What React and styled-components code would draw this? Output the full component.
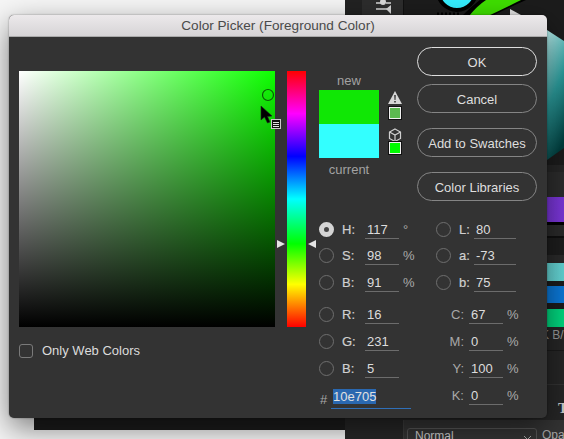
import React from 'react';
import styled, { createGlobalStyle } from 'styled-components';

const GlobalStyle = createGlobalStyle`
  html, body {
    margin: 0;
    padding: 0;
    background: #f4f4f4;
  }
  body {
    font-family: "Liberation Sans", Arial, sans-serif;
  }
`;

const App = () => (
  <Page>
    <GlobalStyle />
    <Backdrop>
      <DesktopArea>
        <CanvasEdge />
      </DesktopArea>
      <AppPanel>
        <ArtworkStrip />
        {STRIPES.map(([height, color], i) => (
          <Stripe key={i} $height={height} $color={color} />
        ))}
        <PanelLabel>K B/</PanelLabel>
        <LayerBand>
          <BandLine $top />
          <BandLine />
        </LayerBand>
        <PanelTitle>T</PanelTitle>
        <LayerRow>
          <BlendSelect>
            Normal
            <SelectChevron width="9" height="6" viewBox="0 0 9 6">
              <path d="M1 1l3.5 3.5L8 1" fill="none" stroke="#aaa" strokeWidth="1" />
            </SelectChevron>
          </BlendSelect>
          <OpacityLabel>Opac</OpacityLabel>
        </LayerRow>
      </AppPanel>
    </Backdrop>

    <Dialog>
      <TitleBar>Color Picker (Foreground Color)</TitleBar>
      <Body>
        <PickerPane>
          <ColorField>
            <FieldMarker />
            <CursorIcon />
          </ColorField>
          <WebColors>
            <Checkbox />
            Only Web Colors
          </WebColors>
        </PickerPane>

        <HueStrip>
          <HueArrow $side="left" />
          <HueArrow $side="right" />
        </HueStrip>

        <ControlsPane>
          <TopControls>
            <PreviewColumn>
              <PreviewLabel>new</PreviewLabel>
              <PreviewSwatch $color="#10e705" />
              <PreviewSwatch $color="#33ffff" />
              <PreviewLabel $below>current</PreviewLabel>
            </PreviewColumn>
            <WarningColumn>
              <WarningGroup>
                <GamutIcon />
                <MiniSwatch $color="#5cb950" />
              </WarningGroup>
              <WarningGroup $tight>
                <CubeIcon />
                <MiniSwatch $color="#00fb00" />
              </WarningGroup>
            </WarningColumn>
            <ButtonStack>
              <ButtonPair>
                <PillButton $primary>OK</PillButton>
                <PillButton>Cancel</PillButton>
              </ButtonPair>
              <PillButton>Add to Swatches</PillButton>
              <PillButton>Color Libraries</PillButton>
            </ButtonStack>
          </TopControls>

          <ValuesGrid>
            <ValuesColumn $width={117}>
              <ValueGroup $short>
                <ValueRow radio="on" label="H:" value="117" unit="°" />
                <ValueRow radio="off" label="S:" value="98" unit="%" />
                <ValueRow radio="off" label="B:" value="91" unit="%" />
              </ValueGroup>
              <ValueGroup>
                <ValueRow radio="off" label="R:" value="16" />
                <ValueRow radio="off" label="G:" value="231" />
                <ValueRow radio="off" label="B:" value="5" />
              </ValueGroup>
              <HexRow>
                <HexMark>#</HexMark>
                <HexField>
                  <HexSelection>10e705</HexSelection>
                </HexField>
              </HexRow>
            </ValuesColumn>
            <ValuesColumn $width={101}>
              <ValueGroup $short>
                <LabRow label="L:" value="80" />
                <LabRow label="a:" value="-73" />
                <LabRow label="b:" value="75" />
              </ValueGroup>
              <ValueGroup>
                <CmykRow label="C:" value="67" />
                <CmykRow label="M:" value="0" />
                <CmykRow label="Y:" value="100" />
                <CmykRow label="K:" value="0" />
              </ValueGroup>
            </ValuesColumn>
          </ValuesGrid>
        </ControlsPane>
      </Body>
    </Dialog>
  </Page>
);

const ValueRow = ({ radio, label, value, unit }) => (
  <Row>
    <Radio $on={radio === 'on'} />
    <RowLabel>{label}</RowLabel>
    <Field $width={34}>{value}</Field>
    {unit && <Unit>{unit}</Unit>}
  </Row>
);

const LabRow = ({ label, value }) => (
  <Row>
    <Radio />
    <RowLabel $narrow>{label}</RowLabel>
    <Field $width={42}>{value}</Field>
  </Row>
);

const CmykRow = ({ label, value }) => (
  <Row>
    <CmykLabel>{label}</CmykLabel>
    <Field $width={34}>{value}</Field>
    <Unit>%</Unit>
  </Row>
);

const ArtworkStrip = () => (
  <ArtSvg viewBox="345 0 219 172" width="219" height="172">
    <defs>
      <linearGradient id="teal" x1="0.2" y1="0" x2="0.5" y2="1">
        <stop offset="0" stopColor="#b4efee" />
        <stop offset="0.5" stopColor="#2c9c9c" />
        <stop offset="1" stopColor="#003c3c" />
      </linearGradient>
    </defs>
    <rect x="345" y="0" width="219" height="172" fill="#1c1c1c" />
    <rect x="345" y="0" width="17" height="20" fill="#222" />
    <rect x="362" y="0" width="41" height="20" fill="#2d2d2d" />
    <rect x="403" y="0" width="1" height="20" fill="#111" />
    <path d="M376 3h6M386 3h5" stroke="#d8d8d8" strokeWidth="1.5" />
    <circle cx="383" cy="2" r="3" fill="#d8d8d8" />
    <path d="M376 9h11" stroke="#d8d8d8" strokeWidth="1.5" />
    <path d="M386 9l5-4v9z" fill="#d8d8d8" />
    <circle cx="457" cy="-9" r="19" fill="#35eeff" stroke="#000" strokeWidth="4" />
    <path d="M462 16 Q472 6 480 0 L526 0 Q508 8 492 16 Z" fill="#000" />
    <path d="M469 16 Q477 6 486 0 L521 0 Q505 8 488 16 Z" fill="#3fe000" />
    <path d="M437 14h24" stroke="#000" strokeWidth="3" strokeDasharray="2 2" />
    <path d="M510 9L521 15V16H510Z" fill="#e4e4e4" />
    <path d="M547 30L564 41V148L547 160Z" fill="url(#teal)" />
    <rect x="345" y="165" width="219" height="7" fill="#262626" />
  </ArtSvg>
);

const FieldMarker = () => (
  <MarkerSvg width="14" height="14" viewBox="0 0 14 14">
    <circle cx="7" cy="7" r="5.5" fill="none" stroke="#0a5c06" strokeWidth="1.2" />
  </MarkerSvg>
);

const CursorIcon = () => (
  <CursorSvg width="24" height="26" viewBox="0 0 24 26">
    <path d="M1 1L1 15L4.5 12L7.5 18L10 17L7.5 11.5L12 11Z" fill="#000" stroke="#222" strokeWidth="0.6" />
    <rect x="11.5" y="14.5" width="9" height="9" fill="#111" stroke="#c8c8c8" strokeWidth="1" />
    <path d="M13 17.5h6M13 19.5h6M13 21.5h6" stroke="#e0e0e0" strokeWidth="1" />
  </CursorSvg>
);

const GamutIcon = () => (
  <svg width="14" height="13" viewBox="0 0 14 13">
    <path d="M7 0L14 13H0Z" fill="#d6d6d6" />
    <path d="M6.2 4h1.6L7.5 9h-1zM6.2 10h1.6v1.6H6.2z" fill="#333" />
  </svg>
);

const CubeIcon = () => (
  <svg width="14" height="14" viewBox="0 0 14 14">
    <path d="M7 1L12.5 4V10.5L7 13.5L1.5 10.5V4Z" fill="none" stroke="#cfcfcf" strokeWidth="1.2" />
    <path d="M1.5 4L7 7L12.5 4M7 7V13.5" fill="none" stroke="#cfcfcf" strokeWidth="1.2" />
  </svg>
);

const STRIPES = [
  [25, '#2c2c2c'],
  [25, 'linear-gradient(90deg, #5d2bd0, #7b36d8)'],
  [3, '#000'],
  [11, '#2a2a2a'],
  [2, '#0f0f0f'],
  [17, '#1d1d1d'],
  [8, '#2a2a2a'],
  [18, 'linear-gradient(90deg, #8fe3e0, #63d4d4)'],
  [5, '#1c1c1c'],
  [17, '#0b78d8'],
  [6, '#1c1c1c'],
  [18, '#00d67e'],
];

const Page = styled.div`
  position: relative;
  width: 564px;
  height: 439px;
  overflow: hidden;
`;

const Backdrop = styled.div`
  display: flex;
  height: 100%;
`;

const DesktopArea = styled.div`
  width: 345px;
  display: flex;
  flex-direction: column;
  justify-content: flex-end;
  background: #f6f6f6;
`;

const CanvasEdge = styled.div`
  height: 12px;
  margin: 0 0 9px 34px;
  background: #1b1b1b;
`;

const AppPanel = styled.div`
  flex: 1;
  display: flex;
  flex-direction: column;
  background: #262626;
  overflow: hidden;
`;

const ArtSvg = styled.svg`
  display: block;
  flex: none;
`;

const Stripe = styled.div`
  flex: none;
  height: ${props => props.$height}px;
  background: ${props => props.$color};
`;

const PanelLabel = styled.div`
  height: 16px;
  padding-left: 196px;
  font-size: 12px;
  line-height: 16px;
  color: #9a9a9a;
  white-space: nowrap;
`;

const LayerBand = styled.div`
  flex: none;
  height: 54px;
  display: flex;
  flex-direction: column;
  justify-content: space-between;
  padding: 7px 0 12px;
  box-sizing: border-box;
`;

const BandLine = styled.div`
  height: 1px;
  background: ${props => props.$top ? '#1a1a1a' : '#333'};
`;

const PanelTitle = styled.div`
  height: 23px;
  padding-left: 213px;
  font: bold 15px/23px "Liberation Serif", serif;
  color: #ccc;
`;

const LayerRow = styled.div`
  flex: none;
  display: flex;
  align-items: flex-start;
  gap: 5px;
  padding-left: 62px;
  height: 19px;
  background: #333;
  box-shadow: inset 58px 0 0 #262626, inset 59px 0 0 #3c3c3c;
`;

const BlendSelect = styled.div`
  position: relative;
  flex: none;
  width: 130px;
  height: 24px;
  margin-top: 8px;
  box-sizing: border-box;
  padding-left: 7px;
  border: 1px solid #555;
  border-radius: 3px;
  font-size: 12px;
  line-height: 14px;
  color: #ccc;
`;

const SelectChevron = styled.svg`
  position: absolute;
  right: 4px;
  top: 6px;
`;

const OpacityLabel = styled.div`
  margin-top: 8px;
  font-size: 12px;
  line-height: 14px;
  color: #aaa;
`;

const Dialog = styled.div`
  position: absolute;
  left: 9px;
  top: 15px;
  width: 538px;
  height: 403px;
  border-radius: 5px;
  background: #333;
  box-shadow: 0 10px 30px rgba(0, 0, 0, 0.5), 0 0 2px rgba(0, 0, 0, 0.4);
  overflow: hidden;
  color: #ddd;
  font-size: 13px;
`;

const TitleBar = styled.div`
  height: 22px;
  box-sizing: border-box;
  border-bottom: 1px solid #aaa;
  background: linear-gradient(#ece9eb, #d6d4d6);
  color: #4a4a4a;
  font-size: 13.6px;
  line-height: 22px;
  text-align: center;
`;

const Body = styled.div`
  display: flex;
  align-items: flex-start;
  padding: 10px 10px 0;
`;

const PickerPane = styled.div`
  width: 256px;
  margin-top: 24px;
`;

const ColorField = styled.div`
  position: relative;
  height: 256px;
  background:
    linear-gradient(rgba(0, 0, 0, 0), #000),
    linear-gradient(90deg, #fff, #0dff00);
`;

const MarkerSvg = styled.svg`
  position: absolute;
  left: 242px;
  top: 17px;
`;

const CursorSvg = styled.svg`
  position: absolute;
  left: 241px;
  top: 34px;
`;

const WebColors = styled.label`
  display: flex;
  align-items: center;
  gap: 9px;
  margin-top: 16px;
  font-size: 13px;
  color: #dcdcdc;
`;

const Checkbox = styled.span`
  width: 14px;
  height: 14px;
  box-sizing: border-box;
  border: 1px solid #7a7a7a;
  border-radius: 3px;
`;

const HueStrip = styled.div`
  position: relative;
  flex: none;
  width: 19px;
  height: 256px;
  margin: 24px 0 0 12px;
  background: linear-gradient(
    #ff0000 0%,
    #ff00ff 16.67%,
    #0000ff 33.33%,
    #00ffff 50%,
    #00ff00 67.5%,
    #ffff00 83.33%,
    #ff0000 100%
  );
`;

const HueArrow = styled.span`
  position: absolute;
  top: 169px;
  ${props => props.$side === 'left' ? 'left: -10px;' : 'right: -10px;'}
  width: 0;
  height: 0;
  border-top: 4px solid transparent;
  border-bottom: 4px solid transparent;
  ${props => props.$side === 'left' ? 'border-left: 8px solid #e4e4e4;' : 'border-right: 8px solid #e4e4e4;'}
`;

const ControlsPane = styled.div`
  flex: none;
  width: 218px;
  margin-left: 13px;
`;

const TopControls = styled.div`
  display: flex;
  align-items: flex-start;
  height: 169px;
`;

const PreviewColumn = styled.div`
  width: 60px;
  padding-top: 26px;
`;

const PreviewLabel = styled.div`
  height: 17px;
  margin-top: ${props => props.$below ? '4px' : '0'};
  font-size: 13px;
  line-height: 15px;
  text-align: center;
  color: #a2a2a2;
`;

const PreviewSwatch = styled.div`
  height: 34px;
  background: ${props => props.$color};
`;

const WarningColumn = styled.div`
  width: 14px;
  margin-left: 9px;
  padding-top: 44px;
  display: flex;
  flex-direction: column;
  gap: 9px;
`;

const WarningGroup = styled.div`
  display: flex;
  flex-direction: column;
  align-items: center;
  gap: ${props => props.$tight ? '0' : '3px'};

  svg {
    display: block;
  }
`;

const MiniSwatch = styled.div`
  width: 12px;
  height: 12px;
  box-sizing: border-box;
  border: 1px solid #f0f0f0;
  box-shadow: 0 0 0 1px #111;
  background: ${props => props.$color};
`;

const ButtonStack = styled.div`
  width: 120px;
  margin-left: auto;
  display: flex;
  flex-direction: column;
  gap: 15px;
`;

const ButtonPair = styled.div`
  display: flex;
  flex-direction: column;
  gap: 8px;
`;

const PillButton = styled.div`
  height: 29px;
  box-sizing: border-box;
  border: 1px solid ${props => props.$primary ? '#dedede' : '#858585'};
  border-radius: 15px;
  font-size: 13px;
  line-height: 29px;
  text-align: center;
  color: #dedede;
`;

const ValuesGrid = styled.div`
  display: flex;
`;

const ValuesColumn = styled.div`
  flex: none;
  width: ${props => props.$width}px;
  display: flex;
  flex-direction: column;
  gap: 5px;
`;

const ValueGroup = styled.div`
  display: flex;
  flex-direction: column;

  > * {
    height: ${props => props.$short ? '26.5px' : '27px'};
  }
`;

const Row = styled.div`
  display: flex;
  align-items: center;
`;

const Radio = styled.span`
  flex: none;
  width: 15px;
  height: 15px;
  box-sizing: border-box;
  border-radius: 50%;
  border: ${props => props.$on ? '5px solid #d4d4d4' : '1px solid #6e6e6e'};
  background: ${props => props.$on ? '#444' : 'transparent'};
  margin-right: 8px;
`;

const RowLabel = styled.span`
  flex: none;
  width: ${props => props.$narrow ? '15px' : '23px'};
  color: #d0d0d0;
  -webkit-text-stroke: 0.2px #d0d0d0;
`;

const CmykLabel = styled.span`
  flex: none;
  width: 33px;
  padding-right: 5px;
  box-sizing: border-box;
  text-align: right;
  color: #a8a8a8;
`;

const Field = styled.span`
  flex: none;
  width: ${props => props.$width}px;
  height: 19px;
  box-sizing: border-box;
  padding-left: 2px;
  border-bottom: 1px solid #6c6c6c;
  line-height: 19px;
  color: #dcdcdc;
`;

const Unit = styled.span`
  margin-left: 4px;
  color: #aaa;
  font-size: 13px;
`;

const HexRow = styled.div`
  display: flex;
  align-items: center;
  height: 27px;
  margin-top: -1px;
`;

const HexMark = styled.span`
  width: 12px;
  padding-left: 1px;
  color: #a8a8a8;
`;

const HexField = styled.span`
  width: 80px;
  height: 20px;
  box-sizing: border-box;
  padding: 0 0 0 2px;
  border-bottom: 1px solid #2f6fb8;
  margin-left: -1px;
`;

const HexSelection = styled.span`
  display: inline-block;
  height: 15px;
  line-height: 15px;
  background: #2a68b0;
  color: #e0e0e0;
`;

export default App;
